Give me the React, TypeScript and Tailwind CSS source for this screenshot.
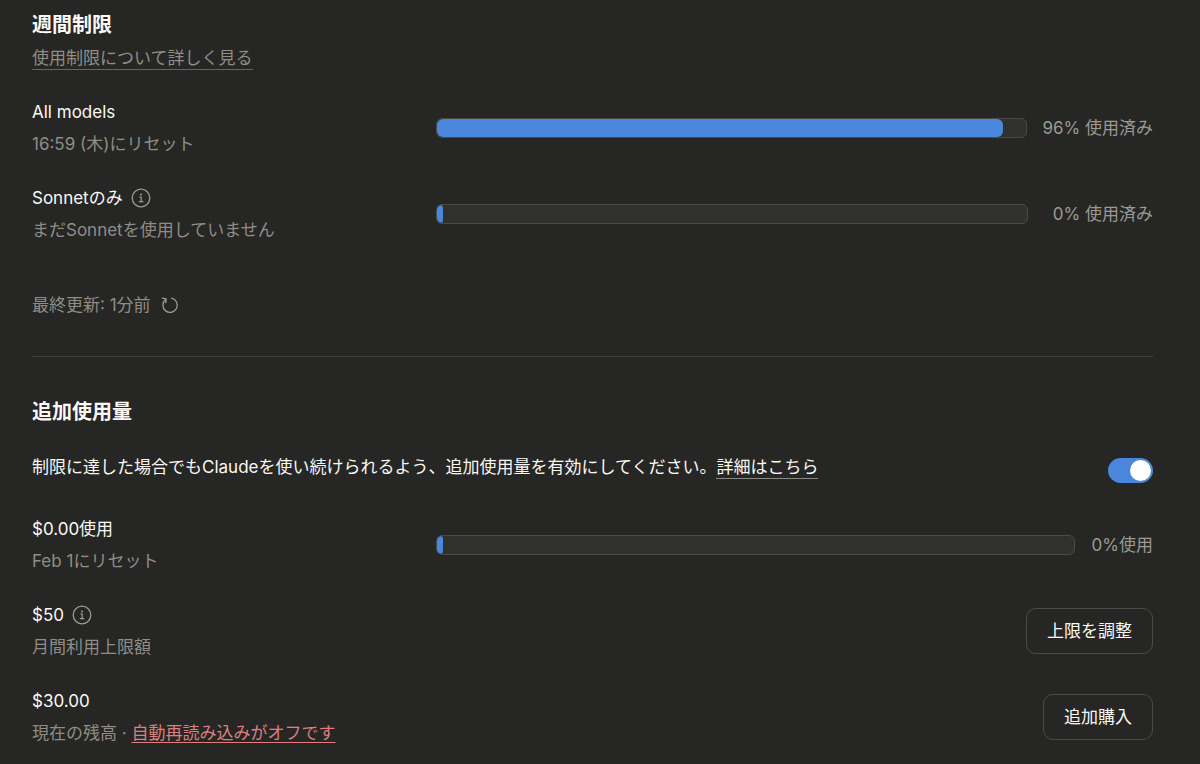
import { useState } from 'react'
import type { ReactNode } from 'react'

interface UsageRowProps {
  title: ReactNode
  subtitle: ReactNode
  children: ReactNode
}

interface MeterProps {
  label: string
  percent: number
  text: string
  textClassName: string
}

function InfoButton({ label }: { label: string }) {
  return (
    <button type="button" aria-label={label} className="text-[#9c9a92]">
      <svg viewBox="0 0 20 20" className="h-5 w-5" fill="none" stroke="currentColor" strokeWidth="1.3">
        <circle cx="10" cy="10" r="8.8" />
        <path d="M8.2 9h2v4.6M7.8 13.6h4.6" strokeWidth="1.2" />
        <circle cx="10" cy="6.5" r="1" fill="currentColor" stroke="none" />
      </svg>
    </button>
  )
}

function RefreshIcon() {
  return (
    <svg
      viewBox="0 0 18 18"
      className="h-[18px] w-[18px]"
      fill="none"
      stroke="currentColor"
      strokeWidth="1.3"
      strokeLinecap="round"
      strokeLinejoin="round"
    >
      <path d="M10.6 2.2A7.2 7.2 0 1 1 4.6 3.6" />
      <path d="M1.4 2.2l3.8 .6-.5 3.8" />
    </svg>
  )
}

function Meter({ label, percent, text, textClassName }: MeterProps) {
  return (
    <div className="flex flex-1 items-center gap-[15px]">
      <div
        role="progressbar"
        aria-label={label}
        aria-valuenow={percent}
        aria-valuemin={0}
        aria-valuemax={100}
        className="h-5 flex-1 overflow-hidden rounded-md border border-[#4a4a47] bg-[#30302e]"
      >
        <div className="h-full min-w-1.5 rounded-md bg-[#4a86dc]" style={{ width: `${percent}%` }} />
      </div>
      <span className={`text-right whitespace-nowrap text-[#9c9a92] ${textClassName}`}>{text}</span>
    </div>
  )
}

function UsageRow({ title, subtitle, children }: UsageRowProps) {
  return (
    <div className="flex items-center justify-between">
      <div className="flex w-[404px] shrink-0 flex-col gap-1.5">
        <div className="flex items-center gap-2 text-[#faf9f5]">{title}</div>
        <p className="text-[#8f8d86]">{subtitle}</p>
      </div>
      {children}
    </div>
  )
}

function OutlineButton({ children }: { children: ReactNode }) {
  return (
    <button
      type="button"
      className="rounded-[10px] border border-[#4a4a47] px-5 py-[9px] whitespace-nowrap text-[#faf9f5]"
    >
      {children}
    </button>
  )
}

export default function App() {
  const [extraUsage, setExtraUsage] = useState(true)

  return (
    <main
      lang="ja"
      className="min-h-screen bg-[#262624] pt-[11px] pr-[47px] pb-2 pl-8 font-['Inter','Noto_Sans_CJK_JP',sans-serif] text-[17px] leading-[26px]"
    >
      <section>
        <h2 className="text-xl leading-7 font-bold text-[#faf9f5]">週間制限</h2>
        <a href="#limits" className="mt-2 inline-block border-b border-[#65645f] leading-[22px] text-[#8f8d86]">
          使用制限について詳しく見る
        </a>

        <div className="mt-7 flex flex-col gap-7">
          <UsageRow title="All models" subtitle="16:59 (木)にリセット">
            <Meter label="All models" percent={96} text="96% 使用済み" textClassName="min-w-[110px]" />
          </UsageRow>
          <UsageRow
            title={
              <>
                Sonnetのみ
                <InfoButton label="Sonnetの制限について" />
              </>
            }
            subtitle="まだSonnetを使用していません"
          >
            <Meter label="Sonnetのみ" percent={0} text="0% 使用済み" textClassName="min-w-[110px]" />
          </UsageRow>
        </div>

        <div className="mt-[49px] flex items-center gap-2.5 text-[#8f8d86]">
          <span>最終更新: 1分前</span>
          <button type="button" aria-label="更新" className="text-[#9c9a92]">
            <RefreshIcon />
          </button>
        </div>
      </section>

      <hr className="mt-[38px] border-[#3d3d3a]" />

      <section className="mt-[41px]">
        <h2 className="text-xl leading-7 font-bold text-[#faf9f5]">追加使用量</h2>

        <div className="mt-6 flex items-center justify-between">
          <p className="text-[#faf9f5]">
            制限に達した場合でもClaudeを使い続けられるよう、追加使用量を有効にしてください。
            <a href="#details" className="inline-block border-b border-[#8a8984] leading-[22px]">
              詳細はこちら
            </a>
          </p>
          <button
            type="button"
            role="switch"
            aria-checked={extraUsage}
            aria-label="追加使用量"
            onClick={() => setExtraUsage(!extraUsage)}
            className={`mt-2 flex h-[25px] w-[45px] items-center rounded-full px-0.5 ${
              extraUsage ? 'justify-end bg-[#4a86dc]' : 'justify-start bg-[#4a4a47]'
            }`}
          >
            <span className="h-[21px] w-[21px] rounded-full bg-white" />
          </button>
        </div>

        <div className="mt-[33px] flex flex-col gap-7">
          <UsageRow title="$0.00使用" subtitle="Feb 1にリセット">
            <Meter label="追加使用量" percent={0} text="0%使用" textClassName="min-w-[63px]" />
          </UsageRow>
          <UsageRow
            title={
              <>
                $50
                <InfoButton label="月間利用上限額について" />
              </>
            }
            subtitle="月間利用上限額"
          >
            <OutlineButton>上限を調整</OutlineButton>
          </UsageRow>
          <UsageRow
            title="$30.00"
            subtitle={
              <>
                現在の残高 ·{' '}
                <a href="#reload" className="text-[#dd7f7d] underline underline-offset-3">
                  自動再読み込みがオフです
                </a>
              </>
            }
          >
            <OutlineButton>追加購入</OutlineButton>
          </UsageRow>
        </div>
      </section>
    </main>
  )
}
